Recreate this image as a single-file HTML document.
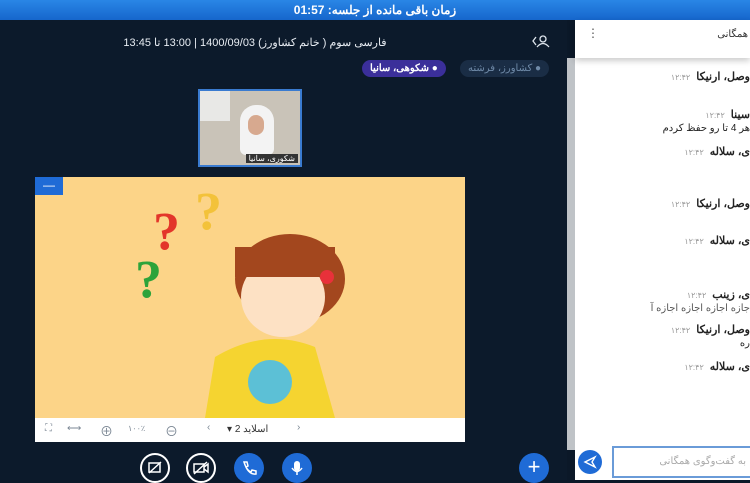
<!DOCTYPE html>
<html><head><meta charset="utf-8"><style>
*{margin:0;padding:0;box-sizing:border-box}
body{width:750px;height:480px;overflow:hidden;background:#0b1828;font-family:"Liberation Sans","Noto Sans CJK SC",sans-serif;position:relative}
.top{position:absolute;left:0;top:0;width:750px;height:20px;background:linear-gradient(#2a86e6,#1666cc);color:#fff;font-size:12px;font-weight:bold;text-align:center;line-height:20px;direction:rtl}
.left{position:absolute;left:0;top:20px;width:567px;height:460px;background:#0c1a2b}
.title{position:absolute;left:110px;top:36px;width:290px;color:#e8edf3;font-size:11px;direction:rtl;text-align:center}
.pill{position:absolute;top:60px;height:17px;border-radius:9px;font-size:10px;line-height:17px;direction:rtl;padding:0 8px}
.vid{position:absolute;left:198px;top:89px;width:104px;height:78px;border:2px solid #3a7bd0;background:#c9c3b8;overflow:hidden}
.slide{position:absolute;left:35px;top:177px;width:430px;height:241px;background:#fcd488;overflow:hidden}
.tb{position:absolute;left:35px;top:418px;width:430px;height:24px;background:#fff;color:#7b8794;font-size:10px}
.btn{position:absolute;top:453px;width:30px;height:30px;border-radius:50%}
.btn svg{position:absolute;left:6px;top:6px}
.right{position:absolute;left:575px;top:20px;width:175px;height:460px;background:#fff}
.sb{position:absolute;left:567px;top:58px;width:8px;height:392px;background:#bfc3c7}
.msg{position:absolute;right:0;direction:rtl;font-size:11px;color:#222;white-space:nowrap}
.msg b{font-weight:bold}
.msg i{font-style:normal;color:#999;font-size:8px;margin-right:6px}
</style></head><body>
<div class="top">زمان باقی مانده از جلسه: 01:57</div>
<div class="left"></div>
<div class="title">فارسی سوم ( خانم کشاورز) 1400/09/03 | 13:00 تا 13:45</div>
<svg style="position:absolute;left:532px;top:34px" width="18" height="14"><path d="M4 3 L1 7 L4 11" stroke="#dfe6ee" fill="none" stroke-width="1.3"/><circle cx="11" cy="5" r="3" stroke="#dfe6ee" fill="none" stroke-width="1.3"/><path d="M5 13 Q11 6 17 13" stroke="#dfe6ee" fill="none" stroke-width="1.3"/></svg>
<div class="pill" style="left:362px;background:#3b2f9a;color:#fff;font-weight:bold">● شکوهی، سانیا</div>
<div class="pill" style="left:460px;background:#1a2d45;color:#6f8aa8">● کشاورز، فرشته</div>
<div class="vid">
<div style="position:absolute;left:40px;top:14px;width:34px;height:50px;background:#f3f3f3;border-radius:16px 16px 6px 6px"></div>
<div style="position:absolute;left:48px;top:24px;width:16px;height:20px;background:#d7a98f;border-radius:8px"></div>
<div style="position:absolute;left:0;top:0;width:30px;height:30px;background:#e8e8e6"></div>
<div style="position:absolute;right:2px;bottom:2px;background:#333;color:#fff;font-size:8px;padding:0 3px">شکوری، سانیا</div>
</div>
<div class="slide">
<svg width="430" height="241">
<text x="118" y="72" font-size="54" fill="#e3352a" font-weight="bold" font-family="Liberation Serif">?</text>
<text x="160" y="52" font-size="54" fill="#f3c23a" font-weight="bold" font-family="Liberation Serif">?</text>
<text x="100" y="120" font-size="54" fill="#2da33a" font-weight="bold" font-family="Liberation Serif">?</text>
<ellipse cx="255" cy="102" rx="55" ry="45" fill="#a3471e"/>
<ellipse cx="248" cy="120" rx="42" ry="40" fill="#fde1c4"/>
<rect x="200" y="70" width="100" height="30" fill="#a3471e"/>
<circle cx="292" cy="100" r="7" fill="#e8313a"/>
<path d="M180 180 Q230 150 280 170 L300 241 L170 241 Z" fill="#f5d430"/>
<circle cx="235" cy="205" r="22" fill="#5cc0d6"/>
</svg>
<div style="position:absolute;left:0;top:0;width:28px;height:18px;background:#1f6bd6;color:#fff;text-align:center;font-size:12px;line-height:16px">—</div>
</div>
<div class="tb">
<span style="position:absolute;left:10px;top:5px">⛶</span>
<span style="position:absolute;left:32px;top:5px">⟷</span>
<span style="position:absolute;left:65px;top:3px;font-size:13px">⊕</span>
<span style="position:absolute;left:93px;top:6px;font-size:8px">۱۰۰٪</span>
<span style="position:absolute;left:130px;top:3px;font-size:13px">⊖</span>
<span style="position:absolute;left:172px;top:4px">‹</span>
<span style="position:absolute;left:192px;top:6px;direction:rtl;color:#333">اسلاید 2 ▾</span>
<span style="position:absolute;left:262px;top:4px">›</span>
</div>
<div class="btn" style="left:140px;border:2px solid #fff"><svg width="16" height="16" style="left:5px;top:5px"><rect x="2" y="3" width="11" height="9" stroke="#fff" fill="none" stroke-width="1.5"/><path d="M2 13 L14 2" stroke="#fff" stroke-width="1.5"/></svg></div>
<div class="btn" style="left:186px;border:2px solid #fff"><svg width="16" height="16" style="left:5px;top:5px"><rect x="1" y="4" width="10" height="8" stroke="#fff" fill="none" stroke-width="1.5"/><path d="M11 7 L15 4 L15 12 L11 9 M1 14 L14 2" stroke="#fff" fill="none" stroke-width="1.5"/></svg></div>
<div class="btn" style="left:234px;background:#1f6bd6"><svg width="18" height="18"><path d="M4 3 L7 3 L8 7 L6 8 Q8 12 11 13 L12 11 L16 12 L16 15 Q8 16 4 3Z" fill="none" stroke="#fff" stroke-width="1.5"/></svg></div>
<div class="btn" style="left:282px;background:#1f6bd6"><svg width="18" height="18"><rect x="6" y="2" width="6" height="10" rx="3" fill="#fff"/><path d="M4 9 Q9 16 14 9 M9 13 V16" stroke="#fff" fill="none" stroke-width="1.5"/></svg></div>
<div class="btn" style="left:519px;background:#1f6bd6;color:#fff;text-align:center;font-size:22px;line-height:28px">+</div>
<div class="sb"></div>
<div class="right">
<div style="position:absolute;left:0;top:0;width:175px;height:38px;box-shadow:0 3px 6px rgba(0,0,0,.2)"></div>
<div style="position:absolute;right:2px;top:9px;font-size:10px;color:#333">همگانی</div>
<div style="position:absolute;left:12px;top:6px;font-size:12px;color:#555">⋮</div>
<div class="msg" style="top:50px"><b>وصل، ارنیکا</b><i>۱۲:۴۲</i></div>
<div class="msg" style="top:88px"><b>سینا</b><i>۱۲:۴۲</i></div>
<div class="msg" style="top:103px;font-size:10px">هر 4 تا رو حفظ کردم</div>
<div class="msg" style="top:125px"><b>ی، سلاله</b><i>۱۲:۴۲</i></div>
<div class="msg" style="top:177px"><b>وصل، ارنیکا</b><i>۱۲:۴۲</i></div>
<div class="msg" style="top:214px"><b>ی، سلاله</b><i>۱۲:۴۲</i></div>
<div class="msg" style="top:268px"><b>ی، زینب</b><i>۱۲:۴۲</i></div>
<div class="msg" style="top:283px;font-size:10px;color:#555">جازه اجازه اجازه اجازه آ</div>
<div class="msg" style="top:303px"><b>وصل، ارنیکا</b><i>۱۲:۴۲</i></div>
<div class="msg" style="top:318px;font-size:10px">ره</div>
<div class="msg" style="top:340px"><b>ی، سلاله</b><i>۱۲:۴۲</i></div>
<div style="position:absolute;left:3px;top:430px;width:24px;height:24px;border-radius:50%;background:#1f6bd6"><svg width="24" height="24"><path d="M17 7 L7 12 L17 17 L14 12 Z" fill="none" stroke="#fff" stroke-width="1.4"/></svg></div>
<div style="position:absolute;left:37px;top:426px;width:140px;height:32px;border:2px solid #6a9bd8;font-size:10px;color:#aaa;direction:rtl;padding:8px 4px">به گفت‌وگوی همگانی</div>
</div>
</body></html>
